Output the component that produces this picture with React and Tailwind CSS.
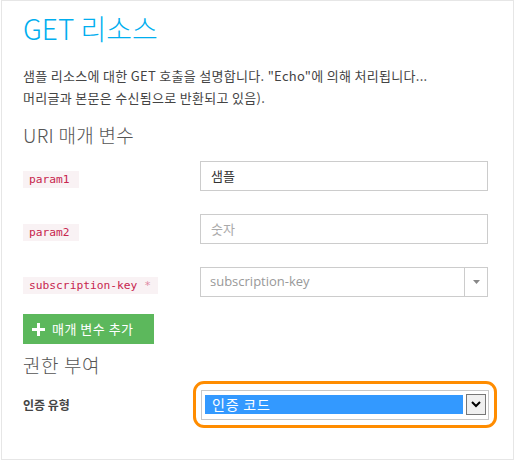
import React from "react";

const kr = { fontFamily: '"Noto Sans CJK KR", "Noto Sans", sans-serif' };
const mono = { fontFamily: '"DejaVu Sans Mono", "Liberation Mono", monospace' };

function Badge({ children, pr = "pr-[9px]" }) {
  return (
    <span
      className={`inline-block bg-[#f9f2f4] text-[#c7254e] text-[11.25px] leading-[17px] pl-[6px] ${pr}`}
      style={mono}
    >
      {children}
    </span>
  );
}

export default function App() {
  return (
    <div className="bg-white w-[516px] h-[462px]" style={kr}>
      <div className="ml-[1px] w-[513px] h-[460px] border border-[#e6e6e6] pl-[21px] pt-[10px] text-[#444]">
        <h1 className="text-[28px] leading-[34px] font-light text-[#00aeef]">GET 리소스</h1>
        <p className="mt-[20px] text-[13px] leading-[22px] tracking-[0.3px] text-[#444]">
          샘플 리소스에 대한 GET 호출을 설명합니다. "Echo"에 의해 처리됩니다...
          <br />
          머리글과 본문은 수신됨으로 반환되고 있음).
        </p>
        <h2 className="mt-[14px] text-[19px] leading-[24px] tracking-[0.3px] font-light text-[#555]">URI 매개 변수</h2>

        <div className="mt-[14px] flex flex-col gap-[23px]">
          <div className="flex items-center">
            <div className="w-[177px]">
              <Badge>param1</Badge>
            </div>
            <div className="w-[288px] h-[30px] border border-[#cccccc] flex items-center px-[10px] text-[13px] text-[#333]">
              샘플
            </div>
          </div>
          <div className="flex items-center">
            <div className="w-[177px]">
              <Badge>param2</Badge>
            </div>
            <div className="w-[288px] h-[30px] border border-[#cccccc] flex items-center px-[10px] text-[13px] text-[#aaa]">
              숫자
            </div>
          </div>
          <div className="flex items-center">
            <div className="w-[177px]">
              <Badge pr="pr-[7px]">
                subscription-key <span className="text-[#e08aa4]">*</span>
              </Badge>
            </div>
            <div className="w-[288px] h-[30px] border border-[#cccccc] flex items-center text-[13px] text-[#999]">
              <div className="flex-1 px-[9px]" style={{ fontFamily: '"Open Sans", sans-serif' }}>subscription-key</div>
              <div className="w-[23px] h-full border-l border-[#cccccc] flex items-center justify-center">
                <svg width="7" height="4" viewBox="0 0 7 4">
                  <path d="M0 0 L7 0 L3.5 4 Z" fill="#888" />
                </svg>
              </div>
            </div>
          </div>
        </div>

        <button className="mt-[17px] w-[131px] h-[30px] bg-[#5cb85c] text-white text-[13px] tracking-[0.5px] flex items-center pl-[9px] gap-[7px]">
          <svg width="13" height="13" viewBox="0 0 13 13">
            <rect x="5" y="0" width="3" height="13" fill="white" />
            <rect x="0" y="5" width="13" height="3" fill="white" />
          </svg>
          <span>매개 변수 추가</span>
        </button>

        <h2 className="mt-[9px] text-[19px] leading-[24px] tracking-[0.6px] font-light text-[#555]">권한 부여</h2>

        <div className="mt-[4px] flex items-center">
          <div className="w-[170px] text-[12px] font-bold text-[#444]">인증 유형</div>
          <div className="w-[304px] h-[47px] border-[3px] border-[#ff8c00] rounded-[11px] flex items-center justify-center">
            <div className="w-[288px] h-[30px] border border-[#c8c8c8] flex items-center pl-[3px] pr-[2px] gap-[3px]">
              <div className="flex-1 h-[19px] bg-[#3399ff] text-white text-[14px] tracking-[0.8px] leading-[19px] pl-[7px]">인증 코드</div>
              <div className="w-[20px] h-[21px] bg-[#f0f0f0] border border-[#777] flex items-center justify-center">
                <svg width="10" height="7" viewBox="0 0 10 7">
                  <path d="M1 1 L5 5 L9 1" stroke="#000" strokeWidth="2" fill="none" />
                </svg>
              </div>
            </div>
          </div>
        </div>
      </div>
    </div>
  );
}
